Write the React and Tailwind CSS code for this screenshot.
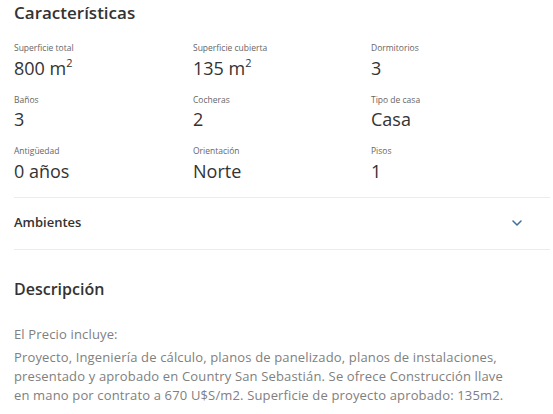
import React from 'react';

const features = [
  { label: 'Superficie total', value: '800 m', sup: '2' },
  { label: 'Superficie cubierta', value: '135 m', sup: '2' },
  { label: 'Dormitorios', value: '3' },
  { label: 'Baños', value: '3' },
  { label: 'Cocheras', value: '2' },
  { label: 'Tipo de casa', value: 'Casa' },
  { label: 'Antigüedad', value: '0 años' },
  { label: 'Orientación', value: 'Norte' },
  { label: 'Pisos', value: '1' },
];

const App = () => {
  return (
    <div
      className="w-[553px] h-[414px] overflow-hidden bg-white text-[#333] pl-[14px] pr-[3px]"
      style={{ fontFamily: '"Open Sans", Lato, sans-serif' }}
    >
      <h2 className="text-[17px] font-semibold leading-none pt-[4px] text-[#333]">Características</h2>

      <div className="grid grid-cols-[179px_178px_1fr] gap-y-[19px] mt-[23px]">
        {features.map((f) => (
          <div key={f.label} className="flex flex-col">
            <span className="text-[8.5px] leading-none text-[#666]">{f.label}</span>
            <span className="text-[18px] leading-none mt-[6px] text-[#333]">
              {f.value}
              {f.sup && <sup className="text-[11px] -top-[8px]">{f.sup}</sup>}
            </span>
          </div>
        ))}
      </div>

      {/* Ambientes accordion */}
      <div className="mt-[17px] border-t border-b border-[#ececec] h-[53px] flex items-center justify-between">
        <span className="text-[13px] font-semibold text-[#333]">Ambientes</span>
        <svg width="10" height="6" viewBox="0 0 10 6" className="mr-[28px]">
          <path d="M1 1l4 4 4-4" fill="none" stroke="#3c6e9c" strokeWidth="1.5" strokeLinecap="round" strokeLinejoin="round" />
        </svg>
      </div>

      <h2 className="text-[16px] font-semibold leading-none mt-[31px] text-[#333]">Descripción</h2>

      <div className="text-[13px] tracking-[0.15px] leading-[19px] text-[#808080] mt-[28px] w-[500px]">
        <p>El Precio incluye:</p>
        <p className="mt-[4px]">
          Proyecto, Ingeniería de cálculo, planos de panelizado, planos de instalaciones, presentado y aprobado en
          Country San Sebastián. Se ofrece Construcción llave en mano por contrato a 670 U$S/m2. Superficie de
          proyecto aprobado: 135m2.
        </p>
      </div>
    </div>
  );
};

export default App;
